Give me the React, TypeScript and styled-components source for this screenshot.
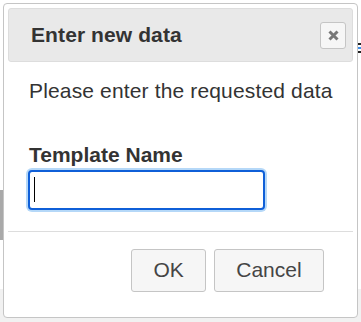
import React from "react";
import styled, { createGlobalStyle } from "styled-components";

const GlobalStyle = createGlobalStyle`
  html, body { margin: 0; padding: 0; background: #ffffff; }
  body { font-family: "Liberation Sans", Arial, sans-serif; }
  * { box-sizing: border-box; }
`;

const Page = styled.div`
  position: relative;
  width: 361px;
  height: 322px;
  overflow: hidden;
  padding: 3px 0 0 3px;
  background:
    linear-gradient(#a9a9a9, #a9a9a9) 0 190px / 3px 50px no-repeat,
    linear-gradient(to bottom, #ffffff 289px, #f1f1f1 289px);
`;

const BehindMarks = styled.div`
  position: absolute;
  right: 0;
  top: 43px;
  width: 3px;
  display: flex;
  flex-direction: column;
  gap: 2px;
`;

const Mark = styled.span<{ $color: string }>`
  display: block;
  width: 3px;
  height: 2px;
  background: ${(p) => p.$color};
`;

const Dialog = styled.div`
  position: relative;
  width: 355px;
  height: 315px;
  border: 1px solid #c5c5c5;
  border-radius: 4px;
  background: #ffffff;
  padding: 4px;
  display: flex;
  flex-direction: column;
  color: #333333;
  font-size: 21px;
`;

const Header = styled.div`
  height: 54px;
  flex: none;
  border: 1px solid #dddddd;
  border-radius: 3px;
  background: #e9e9e9;
  display: flex;
  align-items: center;
  justify-content: space-between;
  padding: 0 6px 0 22px;
`;

const Title = styled.span`
  font-weight: bold;
  font-size: 21px;
  color: #333333;
  line-height: 24px;
  letter-spacing: 0.1px;
`;

const CloseButton = styled.button`
  width: 26px;
  height: 27px;
  padding: 0;
  border: 1px solid #c5c5c5;
  border-radius: 3px;
  background: #f6f6f6;
  display: flex;
  align-items: center;
  justify-content: center;
  cursor: pointer;
`;

const Content = styled.div`
  padding: 17px 20px 21px 21px;
  display: flex;
  flex-direction: column;
  align-items: flex-start;
`;

const Message = styled.div`
  line-height: 24px;
  font-size: 21px;
  letter-spacing: 0.15px;
`;

const Label = styled.label`
  margin-top: 40px;
  line-height: 24px;
  font-weight: bold;
  font-size: 21px;
  color: #333333;
`;

const InputWrap = styled.div`
  position: relative;
  margin: 3px 0 0 -1px;
`;

const TextInput = styled.input`
  display: block;
  width: 237px;
  height: 40px;
  border: 2px solid #0f5fd8;
  border-radius: 4px;
  box-shadow: 0 0 0 2px #b5d8f8;
  padding: 0 5px;
  font-family: "Liberation Sans", Arial, sans-serif;
  font-size: 21px;
  color: #000;
  caret-color: transparent;
  outline: none;
  background: #fff;
`;

const Caret = styled.span`
  position: absolute;
  left: 6px;
  top: 7px;
  width: 1px;
  height: 25px;
  background: #000;
  pointer-events: none;
`;

const Footer = styled.div`
  border-top: 1px solid #dddddd;
  padding: 6px 21px 10px 8px;
  display: flex;
  justify-content: flex-end;
`;

const ActionButton = styled.button`
  margin: 11px 8.5px 10px 0;
  padding: 8.4px 21px;
  border: 1px solid #c5c5c5;
  border-radius: 3px;
  background: #f6f6f6;
  color: #454545;
  font-family: "Liberation Sans", Arial, sans-serif;
  font-size: 21px;
  line-height: normal;
  cursor: pointer;
  &:last-child { margin-right: 8.4px; }
`;

const CloseIcon = () => (
  <svg width="11" height="11" viewBox="0 0 11 11" aria-hidden="true">
    <path d="M1.5 1.5 L9.5 9.5 M9.5 1.5 L1.5 9.5" stroke="#777777" strokeWidth="3" strokeLinecap="butt" />
  </svg>
);

export default function App() {
  return (
    <>
      <GlobalStyle />
      <Page>
        <BehindMarks>
          <Mark $color="#222" />
          <Mark $color="#3d8ee8" />
          <Mark $color="#222" />
        </BehindMarks>
        <Dialog role="dialog" aria-labelledby="dlg-title">
          <Header>
            <Title id="dlg-title">Enter new data</Title>
            <CloseButton aria-label="Close">
              <CloseIcon />
            </CloseButton>
          </Header>
          <Content>
            <Message>Please enter the requested data</Message>
            <Label htmlFor="tpl-name">Template Name</Label>
            <InputWrap>
              <TextInput id="tpl-name" type="text" autoFocus />
              <Caret />
            </InputWrap>
          </Content>
          <Footer>
            <ActionButton>OK</ActionButton>
            <ActionButton>Cancel</ActionButton>
          </Footer>
        </Dialog>
      </Page>
    </>
  );
}
